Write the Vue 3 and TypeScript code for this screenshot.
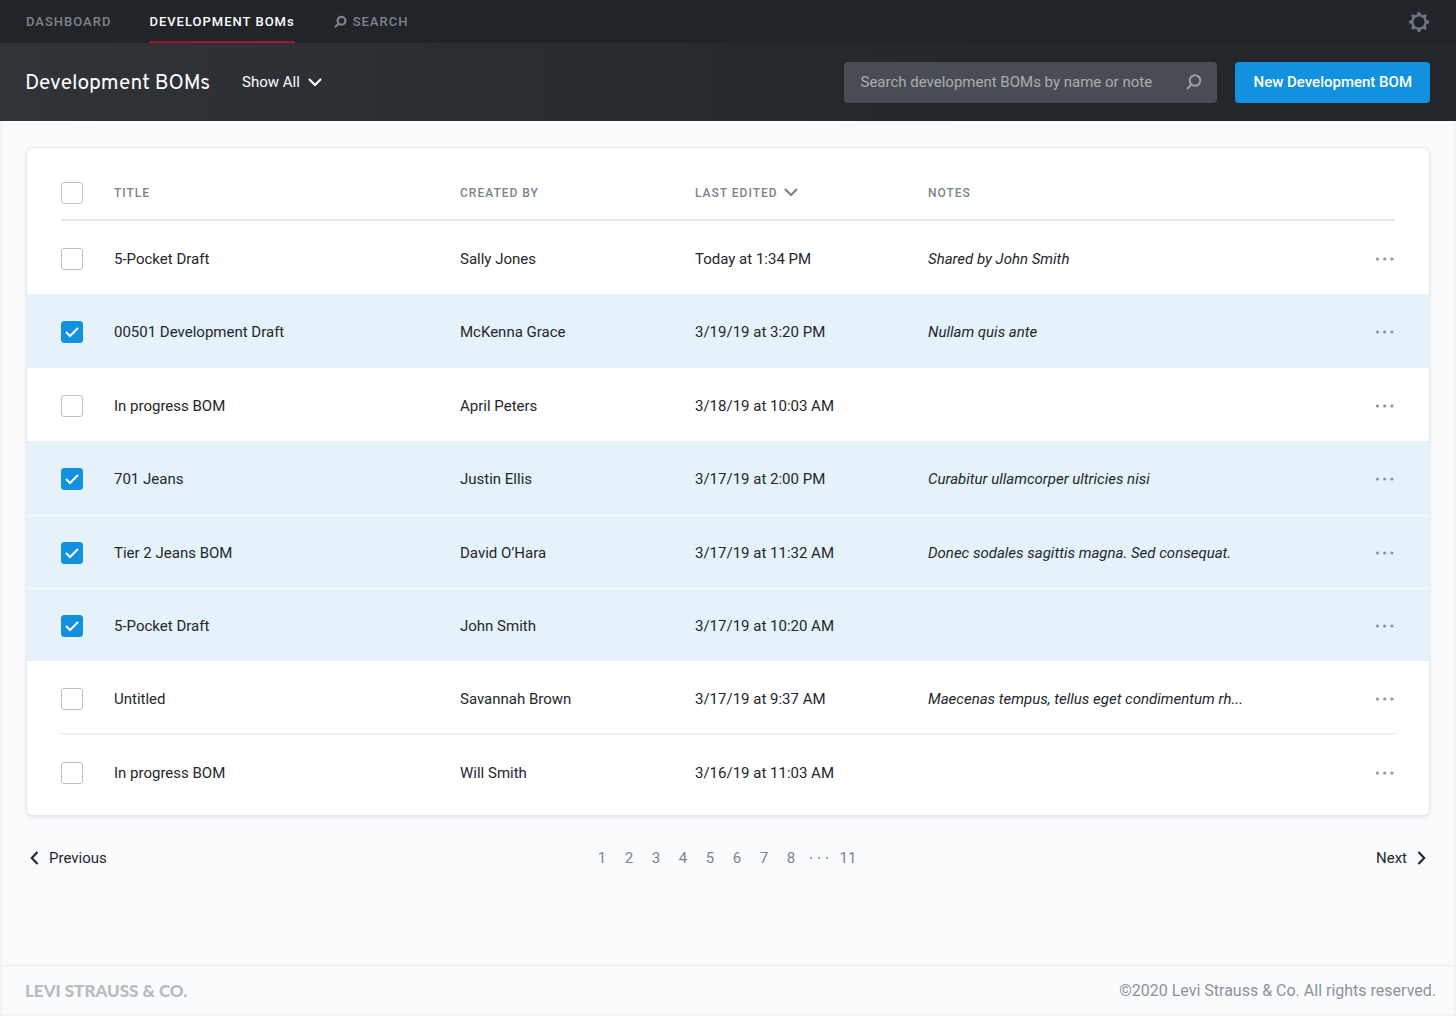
<script setup lang="ts">
import { computed, ref } from 'vue'

interface Bom {
  id: number
  title: string
  createdBy: string
  lastEdited: string
  notes: string
  selected: boolean
}

const boms = ref<Bom[]>([
  { id: 1, title: '5-Pocket Draft', createdBy: 'Sally Jones', lastEdited: 'Today at 1:34 PM', notes: 'Shared by John Smith', selected: false },
  { id: 2, title: '00501 Development Draft', createdBy: 'McKenna Grace', lastEdited: '3/19/19 at 3:20 PM', notes: 'Nullam quis ante', selected: true },
  { id: 3, title: 'In progress BOM', createdBy: 'April Peters', lastEdited: '3/18/19 at 10:03 AM', notes: '', selected: false },
  { id: 4, title: '701 Jeans', createdBy: 'Justin Ellis', lastEdited: '3/17/19 at 2:00 PM', notes: 'Curabitur ullamcorper ultricies nisi', selected: true },
  { id: 5, title: 'Tier 2 Jeans BOM', createdBy: 'David O’Hara', lastEdited: '3/17/19 at 11:32 AM', notes: 'Donec sodales sagittis magna. Sed consequat.', selected: true },
  { id: 6, title: '5-Pocket Draft', createdBy: 'John Smith', lastEdited: '3/17/19 at 10:20 AM', notes: '', selected: true },
  { id: 7, title: 'Untitled', createdBy: 'Savannah Brown', lastEdited: '3/17/19 at 9:37 AM', notes: 'Maecenas tempus, tellus eget condimentum rh...', selected: false },
  { id: 8, title: 'In progress BOM', createdBy: 'Will Smith', lastEdited: '3/16/19 at 11:03 AM', notes: '', selected: false },
])

const pages = [1, 2, 3, 4, 5, 6, 7, 8]
const query = ref('')

const allSelected = computed<boolean>({
  get: () => boms.value.every((bom) => bom.selected),
  set: (value) => boms.value.forEach((bom) => (bom.selected = value)),
})
</script>

<template>
  <div class="page">
    <header>
      <nav class="topnav" aria-label="Main">
        <a href="#dashboard">DASHBOARD</a>
        <a href="#boms" class="active" aria-current="page">DEVELOPMENT BOMs</a>
        <a href="#search" class="search-link">
          <svg width="14" height="14" viewBox="0 0 14 14" fill="none" stroke="currentColor" stroke-width="2.200">
            <circle cx="8.500" cy="5.700" r="3.900" />
            <path d="M5.600 8.800 2.500 11.800" stroke-linecap="round" />
          </svg>
          SEARCH
        </a>
        <button type="button" class="settings" aria-label="Settings">
          <svg width="22" height="22" viewBox="0 0 22 22" fill="none" stroke="currentColor">
            <circle cx="11" cy="11" r="6.700" stroke-width="2.300" />
            <path
              v-for="n in 8"
              :key="n"
              d="M8.800 4.200 9.600 1.600Q9.800.9 10.400.9h1.200Q12.200.9 12.400 1.600l.8 2.600z"
              fill="currentColor"
              stroke="none"
              :transform="`rotate(${n * 45} 11 11)`"
            />
          </svg>
        </button>
      </nav>

      <div class="toolbar">
        <h1>Development BOMs</h1>
        <button type="button" class="filter">
          Show All
          <svg width="14" height="10" viewBox="0 0 14 10" fill="none" stroke="currentColor" stroke-width="2.200">
            <path d="m1 2 6 6 6-6" />
          </svg>
        </button>
        <form class="search" role="search" @submit.prevent>
          <input v-model="query" type="text" aria-label="Search development BOMs" placeholder="Search development BOMs by name or note" />
          <button type="submit" aria-label="Search">
            <svg width="18" height="18" viewBox="0 0 18 18" fill="none" stroke="currentColor" stroke-width="2">
              <circle cx="10" cy="7.500" r="5.300" />
              <path d="M6.200 11.700 2 16" />
            </svg>
          </button>
        </form>
        <button type="button" class="primary">New Development BOM</button>
      </div>
    </header>

    <main>
      <section class="card">
        <table>
          <colgroup>
            <col class="c-check" />
            <col class="c-title" />
            <col class="c-created" />
            <col class="c-edited" />
            <col />
            <col class="c-menu" />
          </colgroup>
          <thead>
            <tr>
              <th scope="col"><input v-model="allSelected" type="checkbox" aria-label="Select all" /></th>
              <th scope="col">TITLE</th>
              <th scope="col">CREATED BY</th>
              <th scope="col" aria-sort="descending">
                <button type="button" class="sort">
                  LAST EDITED
                  <svg width="14" height="12" viewBox="0 0 14 12" fill="none" stroke="currentColor" stroke-width="2.200">
                    <path d="m1 2 6 6 6-6" />
                  </svg>
                </button>
              </th>
              <th scope="col">NOTES</th>
              <td></td>
            </tr>
          </thead>
          <tbody>
            <tr v-for="bom in boms" :key="bom.id" :class="{ selected: bom.selected }">
              <td><input v-model="bom.selected" type="checkbox" :aria-label="`Select ${bom.title}`" /></td>
              <td>{{ bom.title }}</td>
              <td>{{ bom.createdBy }}</td>
              <td>{{ bom.lastEdited }}</td>
              <td class="notes">{{ bom.notes }}</td>
              <td class="menu">
                <button type="button" :aria-label="`Actions for ${bom.title}`">
                  <svg width="20" height="4" viewBox="0 0 20 4" fill="currentColor">
                    <circle cx="2.500" cy="2" r="1.600" />
                    <circle cx="9.700" cy="2" r="1.600" />
                    <circle cx="16.900" cy="2" r="1.600" />
                  </svg>
                </button>
              </td>
            </tr>
          </tbody>
        </table>
      </section>

      <nav class="pager" aria-label="Pagination">
        <a href="#previous" class="step">
          <svg width="9" height="14" viewBox="0 0 9 14" fill="none" stroke="currentColor" stroke-width="2.200">
            <path d="M7.500 1 1.800 7l5.700 6" />
          </svg>
          Previous
        </a>
        <div class="numbers">
          <a v-for="page in pages" :key="page" :href="`#page-${page}`">{{ page }}</a>
          <svg width="20" height="4" viewBox="0 0 20 4" fill="currentColor">
            <circle cx="1" cy="2" r="1" />
            <circle cx="9" cy="2" r="1" />
            <circle cx="17" cy="2" r="1" />
          </svg>
          <a href="#page-11">11</a>
        </div>
        <a href="#next" class="step next">
          Next
          <svg width="9" height="14" viewBox="0 0 9 14" fill="none" stroke="currentColor" stroke-width="2.200">
            <path d="m1.500 1 5.700 6-5.700 6" />
          </svg>
        </a>
      </nav>
    </main>

    <footer>
      <strong>LEVI STRAUSS &amp; CO.</strong>
      <span>©2020 Levi Strauss &amp; Co. All rights reserved.</span>
    </footer>
  </div>
</template>

<style>
body {
  margin: 0;
  background: #fafbfd;
}
</style>

<style scoped>
.page {
  display: flex;
  flex-direction: column;
  box-sizing: border-box;
  min-height: 100vh;
  border-bottom: 2px solid #f3f4f5;
  color: #23272c;
  font: 15px/20px Roboto, sans-serif;
}

a {
  color: inherit;
  text-decoration: none;
}

button {
  padding: 0;
  border: 0;
  background: none;
  color: inherit;
  font: inherit;
  cursor: pointer;
}

svg {
  display: block;
  flex: none;
}

.topnav {
  display: flex;
  align-items: center;
  height: 43px;
  padding: 0 26px;
  background: #212429;
  color: #7d858c;
  font-size: 13px;
  font-weight: 500;
  letter-spacing: 1px;
}

.topnav a {
  display: flex;
  align-items: center;
  box-sizing: border-box;
  height: 43px;
  margin-right: 38px;
  border-top: 2px solid transparent;
  border-bottom: 2px solid transparent;
}

.topnav .active {
  border-bottom-color: #a5142c;
  color: #fff;
}

.topnav .search-link {
  gap: 6px;
}

.settings {
  margin-left: auto;
  color: #6c7680;
}

.toolbar {
  display: flex;
  align-items: center;
  height: 78px;
  padding: 0 26px 0 25px;
  background: linear-gradient(90deg, #303438, #23262b 70%);
  color: #fff;
}

h1 {
  margin: 0 32px 0 0;
  padding-top: 4px;
  font: 400 21px/28px Overpass, Roboto, sans-serif;
}

.filter {
  display: flex;
  align-items: center;
  gap: 8px;
}

.search {
  display: flex;
  align-items: center;
  box-sizing: border-box;
  width: 373px;
  height: 41px;
  margin-left: auto;
  padding: 0 14px 0 16px;
  border-radius: 4px;
  background: #484d54;
  color: #9da1a5;
}

.search input {
  flex: 1;
  min-width: 0;
  padding: 0;
  border: 0;
  outline: 0;
  background: none;
  color: #fff;
  font: inherit;
}

.search input::placeholder {
  color: #a9adb0;
  opacity: 1;
}

.primary {
  height: 41px;
  margin-left: 18px;
  padding: 0 18px;
  border-radius: 4px;
  background: #1292de;
  font-weight: 500;
}

main {
  flex: 1;
  padding: 26px 24px 0;
  border: solid #f3f4f5;
  border-width: 0 2px;
}

.card {
  padding-bottom: 7px;
  border: 1px solid #e6e8ea;
  border-radius: 6px;
  background: #fff;
  box-shadow: 0 2px 4px rgba(30, 40, 50, 0.08);
}

table {
  width: 100%;
  border-spacing: 0;
  table-layout: fixed;
}

.c-check {
  width: 87px;
}

.c-title {
  width: 346px;
}

.c-created {
  width: 235px;
}

.c-edited {
  width: 233px;
}

.c-menu {
  width: 60px;
}

th,
td {
  box-sizing: border-box;
  height: 73px;
  padding: 2px 0 0;
  text-align: left;
  white-space: nowrap;
}

th {
  padding-top: 16px;
  color: #7b848c;
  font-size: 12px;
  font-weight: 500;
  letter-spacing: 1px;
}

th:first-child,
td:first-child {
  padding-left: 34px;
}

/* The rules stop short of the card edge, so they are painted as inset backgrounds. */
thead tr {
  background: linear-gradient(#e3e8ec, #e3e8ec) 34px 100% / calc(100% - 68px) 2px no-repeat;
}

tbody tr:nth-last-child(2):not(.selected) {
  background: linear-gradient(#eff2f4, #eff2f4) 34px 100% / calc(100% - 68px) 2px no-repeat;
}

tbody tr:nth-last-child(2) td {
  height: 74px;
}

.selected {
  background: #e5f2fa;
}

tr:not(.selected) + .selected td {
  height: 74px;
}

.selected + .selected td {
  border-top: 1px solid #f7fbfe;
}

.sort {
  display: flex;
  align-items: center;
  gap: 6px;
  letter-spacing: inherit;
}

.notes {
  font-style: italic;
}

.menu button {
  display: flex;
  align-items: center;
  height: 20px;
  margin-left: auto;
  margin-right: 34px;
  color: #8d959c;
}

input[type='checkbox'] {
  display: block;
  box-sizing: border-box;
  width: 22px;
  height: 22px;
  margin: 0;
  border: 1px solid #bcc2c7;
  border-radius: 3px;
  background: #fff;
  appearance: none;
}

input[type='checkbox']:checked {
  border-color: #1292de;
  background: #1292de
    url("data:image/svg+xml,%3Csvg xmlns='http://www.w3.org/2000/svg' viewBox='0 0 20 20' fill='none' stroke='white' stroke-width='2'%3E%3Cpath d='m4 10 4 4 8-8'/%3E%3C/svg%3E")
    center / 20px 20px no-repeat;
}

.pager {
  display: grid;
  grid-template-columns: 1fr auto 1fr;
  align-items: center;
  margin-top: 32px;
  padding: 0 4px;
}

.step {
  display: flex;
  align-items: center;
  gap: 10px;
}

.next {
  justify-content: flex-end;
}

.numbers {
  display: flex;
  align-items: center;
  gap: 10px;
  padding-right: 6px;
  color: #7b848c;
}

.numbers a {
  min-width: 17px;
  text-align: center;
}

footer {
  display: flex;
  align-items: center;
  justify-content: space-between;
  box-sizing: border-box;
  height: 49px;
  padding: 2px 18px 0 23px;
  border: solid #f3f4f5;
  border-width: 0 2px;
  border-top: 1px solid #ebedef;
  color: #8b939a;
  font-size: 16px;
}

footer strong {
  color: #b6bbbf;
  font: 900 17px/20px Lato, sans-serif;
}
</style>
